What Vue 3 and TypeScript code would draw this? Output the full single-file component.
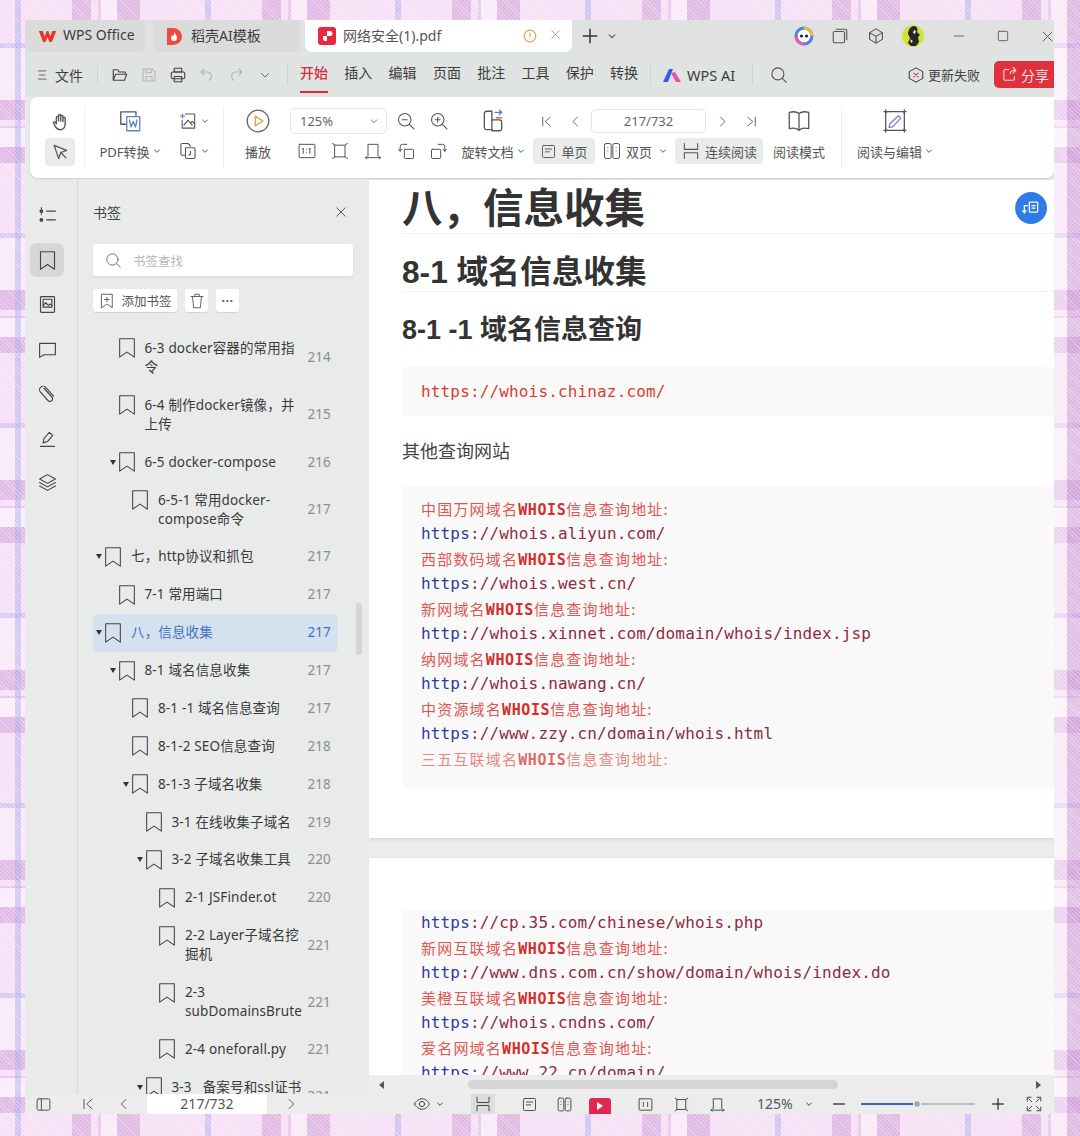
<script setup lang="ts">
import { h } from "vue";
import type { FunctionalComponent } from "vue";

const icons: Record<string, string> = {
  bookmark: '<path d="M4 2h16v20l-8-5.500L4 22z"/>',
  hand: '<path d="M8 13V7a1.2 1.2 0 0 1 2.4 0v4M10.4 11V5a1.2 1.2 0 0 1 2.4 0v6M12.8 11V6a1.2 1.2 0 0 1 2.4 0v5.5M15.2 11.5V8a1.2 1.2 0 0 1 2.4 0v6.5c0 3.6-2.4 6-5.6 6-2.6 0-3.8-1.2-5-3.4L5 13.6c-.7-1.3 1-2.3 1.9-1.2L8 14"/>',
  cursor: '<path d="M5 4l15 6-7 2.6L10.4 20zM13 12.6l6 6.4"/>',
  pdfword: '<path d="M8 15H3.5V3.5h14V7"/><rect x="9" y="8" width="12" height="13" stroke="#5a86c5"/><path d="M11.5 11l1.4 6.5 2.1-5 2.1 5 1.4-6.5" stroke="#5a86c5"/>',
  image: '<path d="M9 3.5h11v17H5V11"/><path d="M7 17l5-6 5 6M15 14.5l2-2 3 3"/><path d="M3 6h5M5.5 3.5v5" stroke="#4a7bd0"/>',
  copypage: '<path d="M8 17H5a1.5 1.5 0 0 1-1.5-1.5V4.5A1.5 1.5 0 0 1 5 3h7l3 3"/><path d="M9 8h10a1.5 1.5 0 0 1 1.5 1.5v10A1.5 1.5 0 0 1 19 21H10.500A1.500 1.500 0 0 1 9 19.500z"/><path d="M15 12v4l-2 1"/>',
  play: '<circle cx="12" cy="12" r="10" stroke="#666"/><path d="M9.500 7.500l7 4.500-7 4.500z" stroke="#e89a3c"/>',
  zoomout: '<circle cx="10.500" cy="10.500" r="7.500"/><path d="M16 16l5.500 5.500M7.500 10.500h6"/>',
  zoomin: '<circle cx="10.500" cy="10.500" r="7.500"/><path d="M16 16l5.500 5.500M7.500 10.500h6M10.500 7.500v6"/>',
  oneone: '<rect x="2.500" y="4" width="19" height="16" rx="1"/><path d="M7.500 9v6M6.500 9.500l1-.5M15.500 9v6M14.500 9.500l1-.5M11.500 10v.1M11.500 14v.1"/>',
  fitpage: '<rect x="6" y="5" width="12" height="14"/><path d="M3 3l3 2M21 3l-3 2M3 21l3-2M21 21l-3-2"/>',
  fitwidth: '<path d="M6 18V4h12v14M3 20h18M3 20l1.500-1.500M3 20l1.500 1.500M21 20l-1.500-1.500M21 20l-1.500 1.500"/>',
  rotleft: '<rect x="10" y="10" width="11" height="11" rx="1"/><path d="M5 12V7a3 3 0 0 1 3-3h5M3 10l2 2.500L7 10"/>',
  rotright: '<rect x="3" y="10" width="11" height="11" rx="1"/><path d="M19 12V7a3 3 0 0 0-3-3h-5M17 10l2 2.500 2-2.500"/>',
  rotdoc: '<path d="M11 20H6a2 2 0 0 1-2-2V5a2 2 0 0 1 2-2h5v8"/><path d="M11 11h7a2 2 0 0 1 2 2v6a2 2 0 0 1-2 2h-7z"/><path d="M14 4h6M18 2l2 2-2 2" stroke="#4a7bd0"/><path d="M20 9h-5" stroke="#e0605c"/>',
  first: '<path d="M6 5v14M18 5l-8 7 8 7"/>',
  prev: '<path d="M15 5l-7 7 7 7"/>',
  next: '<path d="M9 5l7 7-7 7"/>',
  last: '<path d="M18 5v14M6 5l8 7-8 7"/>',
  single: '<rect x="3.500" y="3.500" width="17" height="17" rx="1.500"/><path d="M7.500 8.500h9M7.500 12.500h6"/>',
  double: '<rect x="3" y="3" width="8" height="18" rx="2"/><rect x="13" y="3" width="8" height="18" rx="2"/><path d="M7 8v.1M7 12v.1M17 8v.1M17 12v.1"/>',
  cont: '<path d="M4 3v7h16V3M4 21v-7h16v7"/>',
  book: '<path d="M3 4c4-1 7-.5 9 1 2-1.500 5-2 9-1v15c-4-1-7-.5-9 1.500-2-2-5-2.500-9-1.500zM12 5v15"/>',
  edit: '<rect x="4" y="4" width="16" height="16"/><path d="M15 7.500l2 2-7 7.500-3 .5.5-3z" stroke="#7d7fc9"/><path d="M4 2.500v3M2.500 4h3M20 2.500v3M18.500 4h3M4 18.500v3M2.500 20h3M20 18.500v3M18.500 20h3"/>',
  menu: '<path d="M4 5h13M6 12h9M4 19h13"/>',
  folder: '<path d="M3 19V5h6l2 3h8v3M3 19l3-8h15l-3 8z"/>',
  save: '<path d="M4 4h12l4 4v12H4zM8 4v5h7V4M8 20v-6h8v6"/>',
  print: '<rect x="7" y="3" width="10" height="5"/><rect x="3" y="8" width="18" height="9" rx="2"/><rect x="7" y="14" width="10" height="7"/>',
  undo: '<path d="M8 4L4 8l4 4M4 8h9a6 6 0 0 1 2 11"/>',
  redo: '<path d="M16 4l4 4-4 4M20 8h-9a6 6 0 0 0-2 11"/>',
  chevron: '<path d="M5 9l7 7 7-7"/>',
  search: '<circle cx="10.500" cy="10.500" r="8"/><path d="M16.500 16.500l5 5"/>',
  plus: '<path d="M12 3v18M3 12h18"/>',
  close: '<path d="M5 5l14 14M19 5L5 19"/>',
  min: '<path d="M4 12h16"/>',
  max: '<rect x="4" y="4" width="16" height="16" rx="1.500"/>',
  tabs: '<rect x="3" y="6" width="15" height="15" rx="2"/><path d="M7 3h12a2 2 0 0 1 2 2v12"/>',
  cube: '<path d="M12 2.500l8.500 5v9l-8.500 5-8.500-5v-9zM3.500 7.500l8.500 5 8.500-5M12 12.500v9"/>',
  toc: '<path d="M11 7h10M11 17h10"/><circle cx="5" cy="7" r="1.500" fill="currentColor"/><circle cx="5" cy="17" r="1.500" fill="currentColor"/><path d="M5 3v1M5 10v1"/>',
  thumb: '<rect x="4" y="3" width="16" height="18" rx="1"/><rect x="7" y="6" width="10" height="9"/><path d="M7 13l3-3 3 3 2-1.500 2 1.500"/>',
  comment: '<path d="M3 5h18v13H8l-5 3z"/>',
  clip: '<path d="M8 6l9 10a3 3 0 0 1-4.500 4L4 10.500a4 4 0 0 1 6-5.500l9 10"/>',
  pen: '<path d="M4 21h16M7 17l1-5 6-7 4 3.500-6 7z"/>',
  layers: '<path d="M12 3l9 5-9 5-9-5zM3 12l9 5 9-5M3 16l9 5 9-5"/>',
  trash: '<path d="M4 6h16M9 6V3h6v3M6 6l1.500 15h9L18 6"/>',
  addmark: '<path d="M5 3h14v18l-7-5-7 5zM12 7v6M9 10h6"/>',
  panel: '<rect x="3" y="4" width="18" height="16" rx="2"/><path d="M9 4v16"/>',
  eye: '<path d="M2 12c3-5 6-7 10-7s7 2 10 7c-3 5-6 7-10 7s-7-2-10-7z"/><circle cx="12" cy="12" r="3.500"/>',
  spread: '<rect x="3" y="4" width="18" height="16" rx="1"/><path d="M9 9v6M15 9v6"/>',
  fullscreen: '<path d="M8 3H3v5M16 3h5v5M8 21H3v-5M16 21h5v-5M9 9L5 5M15 9l4-4M9 15l-4 4M15 15l4 4"/>',
  failed: '<path d="M12 2.500l9 5v9l-9 5-9-5v-9z" /><path d="M9 9.500l6 5M15 9.500l-6 5" stroke="#d9363e"/>',
  share: '<path d="M11 5H6a2 2 0 0 0-2 2v11a2 2 0 0 0 2 2h11a2 2 0 0 0 2-2v-3M13 11c0-3 3-5 8-5M17 2l4 4-4 4"/>',
  swap: '<rect x="10" y="5" width="10" height="12" rx="1"/><path d="M13 9h4M13 12h4M8 9H4v9M2 15l2 3 2-3"/>',
};

const Ico: FunctionalComponent<{ n: string; s?: number; w?: number }> = (p) =>
  h("svg", {
    width: p.s ?? 20,
    height: p.s ?? 20,
    viewBox: "0 0 24 24",
    fill: "none",
    stroke: "currentColor",
    "stroke-width": p.w ?? 1.5,
    "stroke-linecap": "round",
    "stroke-linejoin": "round",
    innerHTML: icons[p.n],
  });
Ico.props = ["n", "s", "w"];

const menuIcons = [
  { n: "folder", dim: false },
  { n: "save", dim: true },
  { n: "print", dim: false },
  { n: "undo", dim: true },
  { n: "redo", dim: true },
  { n: "chevron", dim: false },
];
const menus = ["插入", "编辑", "页面", "批注", "工具", "保护", "转换"];
const sideIcons = ["toc", "bookmark", "thumb", "comment", "clip", "pen", "layers"];

type Mark = { label: string; page: number; level: number; arrow?: boolean; active?: boolean };
const marks: Mark[] = [
  { label: "6-3 docker容器的常用指令", page: 214, level: 1 },
  { label: "6-4 制作docker镜像，并上传", page: 215, level: 1 },
  { label: "6-5 docker-compose", page: 216, level: 1, arrow: true },
  { label: "6-5-1 常用docker-compose命令", page: 217, level: 2 },
  { label: "七，http协议和抓包", page: 217, level: 0, arrow: true },
  { label: "7-1 常用端口", page: 217, level: 1 },
  { label: "八，信息收集", page: 217, level: 0, arrow: true, active: true },
  { label: "8-1 域名信息收集", page: 217, level: 1, arrow: true },
  { label: "8-1 -1 域名信息查询", page: 217, level: 2 },
  { label: "8-1-2 SEO信息查询", page: 218, level: 2 },
  { label: "8-1-3 子域名收集", page: 218, level: 2, arrow: true },
  { label: "3-1 在线收集子域名", page: 219, level: 3 },
  { label: "3-2 子域名收集工具", page: 220, level: 3, arrow: true },
  { label: "2-1 JSFinder.ot", page: 220, level: 4 },
  { label: "2-2 Layer子域名挖掘机", page: 221, level: 4 },
  { label: "2-3 subDomainsBrute", page: 221, level: 4 },
  { label: "2-4 oneforall.py", page: 221, level: 4 },
  { label: "3-3\u00a0\u00a0\u00a0备案号和ssl证书查询", page: 221, level: 3, arrow: true },
];

type Line = { site?: string; scheme?: string; rest?: string; faint?: boolean };
const blockOne: Line[] = [
  { site: "中国万网" },
  { scheme: "https", rest: "://whois.aliyun.com/" },
  { site: "西部数码" },
  { scheme: "https", rest: "://whois.west.cn/" },
  { site: "新网" },
  { scheme: "http", rest: "://whois.xinnet.com/domain/whois/index.jsp" },
  { site: "纳网" },
  { scheme: "http", rest: "://whois.nawang.cn/" },
  { site: "中资源" },
  { scheme: "https", rest: "://www.zzy.cn/domain/whois.html" },
  { site: "三五互联", faint: true },
];
const blockTwo: Line[] = [
  { scheme: "https", rest: "://cp.35.com/chinese/whois.php" },
  { site: "新网互联" },
  { scheme: "http", rest: "://www.dns.com.cn/show/domain/whois/index.do" },
  { site: "美橙互联" },
  { scheme: "https", rest: "://whois.cndns.com/" },
  { site: "爱名网" },
  { scheme: "https", rest: "://www.22.cn/domain/" },
];
</script>

<template>
  <div class="window">
    <header class="tabs">
      <div class="tab home">
        <svg width="19" height="15" viewBox="0 0 24 18"><path d="M1 2l5.500 14h3L12 10l2.500 6h3L23 2h-5l-2.500 7L13 2h-2L8.500 9 6 2z" fill="#e6352b" /></svg>
        <span>WPS Office</span>
      </div>
      <div class="tab docer">
        <svg width="15" height="19" viewBox="0 0 15 19"><path d="M0 1h6a9 8.500 0 0 1 0 17H0z" fill="#ef4a3c" /><path d="M7 5c1 2 3 3 3 6a3 3 0 0 1-6 0c0-1.500 1-2 1.500-3 .5 1 1 1 1.500 0z" fill="#fff" /></svg>
        <span>稻壳AI模板</span>
      </div>
      <div class="tab current">
        <svg width="18" height="18" viewBox="0 0 18 18"><rect width="18" height="18" rx="3" fill="#e8283c" /><path d="M9 4h3a2.500 2.500 0 0 1 0 5H9zM5 9h4v5H6.500L5 12.500z" fill="#fff" /></svg>
        <span class="tab-title">网络安全(1).pdf</span>
        <svg class="warn" width="14" height="14" viewBox="0 0 14 14" fill="none" stroke="#e3a44a" stroke-width="1.200"><circle cx="7" cy="7" r="5.800" /><path d="M7 3.800v4M7 9.500v.8" /></svg>
        <span class="tab-x"><Ico n="close" :s="13" /></span>
      </div>
      <span class="tab-plus"><Ico n="plus" :s="18" :w="2" /></span>
      <span class="tab-more"><Ico n="chevron" :s="10" :w="2.500" /></span>
      <div class="win-btns">
        <svg class="mascot" width="20" height="20" viewBox="0 0 20 20">
          <circle cx="10" cy="10" r="8" fill="#fff" stroke="#4b7fe0" stroke-width="3" />
          <path d="M10 2a8 8 0 0 1 8 8" fill="none" stroke="#f0b93a" stroke-width="3" />
          <path d="M2 10a8 8 0 0 0 8 8" fill="none" stroke="#e25fa8" stroke-width="3" />
          <circle cx="7.500" cy="10" r="1.600" fill="#222" />
          <circle cx="12.500" cy="10" r="1.600" fill="#222" />
        </svg>
        <span class="win-tabs"><Ico n="tabs" :s="18" /></span>
        <span class="win-cube"><Ico n="cube" :s="18" /></span>
        <svg class="avatar" width="22" height="22" viewBox="0 0 22 22">
          <circle cx="11" cy="11" r="11" fill="#d3e23a" />
          <path d="M12 1c3 0 4 3 3 6l3 3-2 2 1 5-3 4H9l-3-3 2-5-2-4c0-4 3-8 6-8z" fill="#262626" />
          <path d="M12 5l2 1-1 3-2-1zM8 14l3 2-2 2z" fill="#e9e9e9" />
        </svg>
        <span class="win-min"><Ico n="min" :s="14" /></span>
        <span class="win-max"><Ico n="max" :s="14" /></span>
        <span class="win-close"><Ico n="close" :s="15" /></span>
      </div>
    </header>

    <nav class="menu">
      <span class="menu-burger"><Ico n="menu" :s="14" /></span>
      <span class="menu-file">文件</span>
      <i class="menu-sep"></i>
      <span v-for="item in menuIcons" :key="item.n" class="menu-ico" :class="{ dim: item.dim }">
        <Ico :n="item.n" :s="item.n === 'chevron' ? 12 : 18" />
      </span>
      <i class="menu-sep second"></i>
      <span class="menu-item on">开始</span>
      <span v-for="m in menus" :key="m" class="menu-item">{{ m }}</span>
      <i class="menu-sep third"></i>
      <svg class="ai-logo" width="18" height="14" viewBox="0 0 18 14">
        <path d="M0 14L6 1h4L5 14z" fill="#2f5fe8" />
        <path d="M8 5l4-1 6 10h-5z" fill="#ea4fa0" />
      </svg>
      <span class="ai-text">WPS AI</span>
      <i class="menu-sep fourth"></i>
      <span class="menu-search"><Ico n="search" :s="18" /></span>
      <div class="menu-right">
        <span class="update"><Ico n="failed" :s="18" />更新失败</span>
        <span class="share-btn"><Ico n="share" :s="17" />分享</span>
      </div>
    </nav>

    <section class="ribbon">
      <div class="col hand-col">
        <span class="cell"><Ico n="hand" :s="22" /></span>
        <span class="cell picked"><Ico n="cursor" :s="20" /></span>
      </div>
      <i class="rib-sep s1"></i>
      <div class="col pdf-col">
        <span class="cell"><Ico n="pdfword" :s="26" :w="1.200" /></span>
        <span class="cell label">PDF转换<Ico class="caret" n="chevron" :s="8" :w="3" /></span>
      </div>
      <div class="col img-col">
        <span class="cell"><Ico n="image" :s="20" :w="1.300" /><Ico class="caret" n="chevron" :s="8" :w="3" /></span>
        <span class="cell"><Ico n="copypage" :s="20" :w="1.300" /><Ico class="caret" n="chevron" :s="8" :w="3" /></span>
      </div>
      <i class="rib-sep s2"></i>
      <div class="col play-col">
        <span class="cell"><Ico n="play" :s="26" :w="1.200" /></span>
        <span class="cell label">播放</span>
      </div>
      <div class="col zoom-col">
        <div class="zoom-top">
          <span class="zoom-select">125%<Ico n="chevron" :s="10" :w="2" /></span>
          <span class="cell icon33"><Ico n="zoomout" :s="20" :w="1.300" /></span>
          <span class="cell icon33"><Ico n="zoomin" :s="20" :w="1.300" /></span>
        </div>
        <div class="zoom-bottom">
          <span class="cell icon33"><Ico n="oneone" :s="20" :w="1.200" /></span>
          <span class="cell icon33"><Ico n="fitpage" :s="20" :w="1.200" /></span>
          <span class="cell icon33"><Ico n="fitwidth" :s="20" :w="1.200" /></span>
          <span class="cell icon33"><Ico n="rotleft" :s="20" :w="1.200" /></span>
          <span class="cell icon33"><Ico n="rotright" :s="20" :w="1.200" /></span>
        </div>
      </div>
      <div class="col rot-col">
        <span class="cell"><Ico n="rotdoc" :s="26" :w="1.200" /></span>
        <span class="cell label">旋转文档<Ico class="caret" n="chevron" :s="8" :w="3" /></span>
      </div>
      <div class="col nav-col">
        <div class="nav-top">
          <span class="cell nav-btn"><Ico n="first" :s="15" :w="1.400" /></span>
          <span class="cell nav-btn"><Ico n="prev" :s="15" :w="1.400" /></span>
          <span class="page-box">217/732</span>
          <span class="cell nav-btn"><Ico n="next" :s="15" :w="1.400" /></span>
          <span class="cell nav-btn"><Ico n="last" :s="15" :w="1.400" /></span>
        </div>
        <div class="nav-bottom">
          <span class="cell view single picked"><Ico n="single" :s="17" :w="1.300" />单页</span>
          <span class="cell view double"><Ico n="double" :s="20" :w="1.200" />双页<Ico class="caret" n="chevron" :s="8" :w="3" /></span>
          <span class="cell view cont picked"><Ico n="cont" :s="20" :w="1.300" />连续阅读</span>
        </div>
      </div>
      <div class="col read-col">
        <span class="cell"><Ico n="book" :s="26" :w="1.200" /></span>
        <span class="cell label">阅读模式</span>
      </div>
      <i class="rib-sep s3"></i>
      <div class="col edit-col">
        <span class="cell"><Ico n="edit" :s="28" :w="1.100" /></span>
        <span class="cell label">阅读与编辑<Ico class="caret" n="chevron" :s="8" :w="3" /></span>
      </div>
    </section>

    <main class="main">
      <aside class="rail">
        <span v-for="s in sideIcons" :key="s" class="rail-btn" :class="{ on: s === 'bookmark' }">
          <Ico :n="s" :s="21" :w="1.300" />
        </span>
      </aside>

      <aside class="panel">
        <div class="panel-head">
          <span>书签</span>
          <Ico n="close" :s="14" />
        </div>
        <div class="panel-search">
          <Ico n="search" :s="17" :w="1.300" />
          <span>书签查找</span>
        </div>
        <div class="panel-actions">
          <span class="act add"><Ico n="addmark" :s="18" :w="1.200" />添加书签</span>
          <span class="act square"><Ico n="trash" :s="18" :w="1.200" /></span>
          <span class="act square dots">···</span>
        </div>
        <ul class="tree">
          <li
            v-for="m in marks"
            :key="m.label"
            class="row"
            :class="{ active: m.active }"
            :style="{ paddingLeft: m.level * 13.5 + 'px' }"
          >
            <span class="arrow"><i v-if="m.arrow"></i></span>
            <span class="mark"><Ico n="bookmark" :s="22" :w="1.150" /></span>
            <span class="row-label">{{ m.label }}</span>
            <span class="row-page">{{ m.page }}</span>
          </li>
        </ul>
        <i class="panel-thumb"></i>
      </aside>

      <div class="doc">
        <div class="pages">
          <article class="page first-page">
            <h1>八，信息收集</h1>
            <h2>8-1 域名信息收集</h2>
            <h3>8-1 -1 域名信息查询</h3>
            <pre class="code short"><span class="plain-url">https://whois.chinaz.com/</span></pre>
            <p class="para">其他查询网站</p>
            <div class="code long">
              <div v-for="(l, i) in blockOne" :key="i" class="code-line">
                <template v-if="l.site">
                  <span class="cn" :class="{ faint: l.faint }">{{ l.site }}域名<b>WHOIS</b>信息查询地址:</span>
                </template>
                <template v-else><span class="scheme">{{ l.scheme }}</span><span class="rest">{{ l.rest }}</span></template>
              </div>
            </div>
          </article>
          <article class="page second-page">
            <div class="code tail">
              <div v-for="(l, i) in blockTwo" :key="i" class="code-line">
                <template v-if="l.site">
                  <span class="cn">{{ l.site }}域名<b>WHOIS</b>信息查询地址:</span>
                </template>
                <template v-else><span class="scheme">{{ l.scheme }}</span><span class="rest">{{ l.rest }}</span></template>
              </div>
            </div>
          </article>
        </div>
        <div class="hbar">
          <i class="tri left"></i>
          <i class="hbar-thumb"></i>
          <i class="tri right"></i>
        </div>
        <span class="float-btn"><Ico n="swap" :s="20" :w="1.500" /></span>
      </div>
    </main>

    <footer class="status">
      <span class="st panel-t"><Ico n="panel" :s="17" :w="1.300" /></span>
      <span class="st first-t"><Ico n="first" :s="16" :w="1.300" /></span>
      <span class="st prev-t"><Ico n="prev" :s="16" :w="1.300" /></span>
      <span class="st-page">217/732</span>
      <span class="st next-t"><Ico n="next" :s="16" :w="1.300" /></span>
      <span class="st eye-t"><Ico n="eye" :s="18" :w="1.300" /></span>
      <span class="st caret-t"><Ico n="chevron" :s="8" :w="3" /></span>
      <span class="st cont-t"><Ico n="cont" :s="18" :w="1.300" /></span>
      <span class="st single-t"><Ico n="single" :s="17" :w="1.300" /></span>
      <span class="st double-t"><Ico n="double" :s="17" :w="1.300" /></span>
      <span class="st-play"><i></i></span>
      <span class="st spread-t"><Ico n="spread" :s="17" :w="1.300" /></span>
      <span class="st fit-t"><Ico n="fitpage" :s="17" :w="1.300" /></span>
      <span class="st width-t"><Ico n="fitwidth" :s="17" :w="1.300" /></span>
      <span class="st-zoom">125%</span>
      <span class="st caret2-t"><Ico n="chevron" :s="8" :w="3" /></span>
      <span class="st minus-t"><Ico n="min" :s="16" :w="2.400" /></span>
      <span class="slider"><i class="fill"></i><i class="knob"></i></span>
      <span class="st plus-t"><Ico n="plus" :s="14" :w="2.400" /></span>
      <span class="st full-t"><Ico n="fullscreen" :s="18" :w="1.300" /></span>
    </footer>
  </div>
</template>

<style>
html,
body {
  height: 1136px;
  overflow: hidden;
}
body {
  margin: 0;
  background-color: #f7dff6;
  background-image:
    repeating-linear-gradient(45deg, rgba(255, 255, 255, 0.3) 0 1px, transparent 1px 3px),
    repeating-linear-gradient(90deg, transparent 0 15px, rgba(170, 170, 240, 0.5) 15px 21px, transparent 21px 72px, rgba(200, 150, 210, 0.5) 72px 91px, transparent 91px 98px, rgba(205, 150, 215, 0.3) 98px 101px, rgba(255, 255, 255, 0.35) 101px 117px, rgba(200, 150, 210, 0.5) 117px 140px, transparent 140px 190px),
    repeating-linear-gradient(180deg, transparent 0 43px, rgba(170, 170, 240, 0.4) 43px 48px, rgba(255, 255, 255, 0.3) 48px 100px, rgba(205, 150, 215, 0.5) 100px 120px, transparent 120px 126px, rgba(205, 150, 215, 0.35) 126px 128px, rgba(255, 255, 255, 0.4) 128px 147px, rgba(205, 150, 215, 0.5) 147px 163px, transparent 163px 190px);
}
</style>

<style scoped>
.window {
  width: 1029px;
  height: 1094px;
  margin: 20px 0 0 25px;
  display: flex;
  flex-direction: column;
  overflow: hidden;
  background: #e9eaea;
  color: #3d3d3d;
  font-family: "Noto Sans", "Noto Sans CJK SC", sans-serif;
}
svg {
  display: block;
  flex: none;
}
i {
  font-style: normal;
}

/* tab strip */
.tabs {
  height: 32px;
  flex: none;
  display: flex;
  align-items: center;
  background: #dfe2e1;
  font-size: 14px;
}
.tabs > * {
  flex: none;
}
.tab {
  height: 32px;
  display: flex;
  align-items: center;
  border-radius: 0 0 7px 7px;
}
.tab span {
  position: relative;
  top: -1.5px;
}
.home {
  width: 120px;
  padding-left: 13px;
  gap: 6px;
  background: #d9dcdb;
  box-sizing: border-box;
}
.docer {
  width: 147px;
  margin-left: 8px;
  padding-left: 14px;
  gap: 9px;
  background: #d9dcdb;
  box-sizing: border-box;
}
.current {
  width: 267px;
  margin-left: 5px;
  padding-left: 13px;
  box-sizing: border-box;
  background: #fff;
}
.tab-title {
  margin-left: 7px;
  width: 178px;
  color: #555;
}
.warn {
  margin-left: 2px;
}
.tab-x {
  margin-left: 12px;
  color: #999;
}
.tab-plus {
  margin-left: 9px;
  color: #333;
}
.tab-more {
  margin-left: 8px;
  color: #444;
}
.win-btns {
  margin-left: 177px;
  display: flex;
  align-items: center;
  color: #555;
}
.win-tabs {
  margin-left: 17px;
}
.win-cube {
  margin-left: 18px;
}
.avatar {
  margin-left: 17px;
}
.win-min {
  margin-left: 28px;
}
.win-max {
  margin-left: 30px;
}
.win-close {
  margin-left: 30px;
}

/* menu row */
.menu {
  height: 45px;
  flex: none;
  display: flex;
  align-items: center;
  padding-left: 11px;
  background: #dfe3e1;
  font-size: 14px;
}
.menu-burger {
  color: #555;
}
.menu-file {
  margin-left: 5px;
}
.menu-sep {
  width: 1px;
  height: 20px;
  margin-left: 14px;
  background: #cfd2d1;
}
.menu-ico {
  width: 29px;
  display: flex;
  justify-content: center;
  color: #444;
}
.menu-sep + .menu-ico {
  margin-left: 7px;
}
.dim {
  color: #b5b8b7;
}
.menu-sep.second {
  margin-left: 8px;
}
.menu-item {
  margin-left: 16.300px;
  align-self: flex-start;
  padding: 10px 0 7px;
  line-height: 22px;
  border-bottom: 2px solid transparent;
}
.menu-sep.second + .menu-item {
  margin-left: 12px;
}
.menu-item.on {
  color: #d32f3a;
  font-weight: 500;
  border-bottom-color: #d32f3a;
}
.menu-sep.third {
  margin-left: 12px;
}
.ai-logo {
  margin-left: 12px;
}
.ai-text {
  margin-left: 6px;
  font-size: 14.5px;
}
.menu-sep.fourth {
  margin-left: 17px;
}
.menu-search {
  margin-left: 17px;
  color: #555;
}
.menu-right {
  margin-left: auto;
  display: flex;
  align-items: center;
}
.update {
  display: flex;
  align-items: center;
  gap: 3px;
  font-size: 13px;
  color: #444;
}
.share-btn {
  width: 60px;
  height: 27px;
  box-sizing: border-box;
  margin-left: 14px;
  padding-left: 7px;
  display: flex;
  align-items: center;
  gap: 3px;
  border-radius: 5px 0 0 5px;
  background: #e0303c;
  color: #fbe0e0;
  font-size: 14px;
}

/* ribbon */
.ribbon {
  height: 81px;
  flex: none;
  box-sizing: border-box;
  margin-left: 5px;
  padding: 9px 0 0 15px;
  display: flex;
  background: #fff;
  border-radius: 8px 0 8px 8px;
  box-shadow: 0 1px 2px rgba(0, 0, 0, 0.12);
  color: #555;
  font-size: 13px;
}
.col {
  display: flex;
  flex-direction: column;
  align-items: center;
  flex: none;
}
.col > * {
  flex: none;
}
.cell {
  height: 30px;
  display: flex;
  align-items: center;
  justify-content: center;
  white-space: nowrap;
}
.picked {
  background: #eaeceb;
  border-radius: 4px;
}
.caret {
  margin-left: 3px;
  color: #555;
}
.hand-col {
  width: 30px;
}
.hand-col .cell {
  width: 30px;
  height: 28px;
}
.hand-col .cell:first-child {
  height: 32px;
}
.rib-sep {
  width: 1px;
  height: 62px;
  flex: none;
  background: #eeeeee;
}
.rib-sep.s1 {
  margin-left: 9px;
}
.pdf-col {
  width: 60px;
  margin-left: 15px;
}
.img-col {
  width: 34px;
  margin-left: 16px;
}
.rib-sep.s2 {
  margin-left: 13px;
}
.play-col {
  width: 26px;
  margin-left: 21px;
}
.zoom-col {
  margin-left: 19px;
  width: 166px;
  align-items: flex-start;
}
.zoom-top,
.zoom-bottom {
  display: flex;
  height: 30px;
  align-items: center;
}
.zoom-select {
  width: 97px;
  height: 26px;
  margin-right: 2px;
  padding: 0 7px 0 9px;
  box-sizing: border-box;
  display: flex;
  align-items: center;
  justify-content: space-between;
  border: 1px solid #e3e3e3;
  border-radius: 5px;
  font-size: 13px;
  color: #666;
}
.icon33 {
  width: 33px;
}
.rot-col {
  width: 66px;
  margin-left: 4px;
}
.nav-col {
  width: 231px;
  margin-left: 7px;
  align-items: flex-start;
}
.nav-top,
.nav-bottom {
  display: flex;
  height: 30px;
  align-items: center;
}
.nav-top {
  gap: 3px;
}
.nav-btn {
  width: 26px;
}
.page-box {
  width: 115px;
  height: 24px;
  box-sizing: border-box;
  display: flex;
  align-items: center;
  justify-content: center;
  border: 1px solid #e3e3e3;
  border-radius: 5px;
  font-size: 13px;
  color: #666;
}
.view {
  height: 26px;
  gap: 4px;
}
.view.single {
  width: 62px;
}
.view.double {
  width: 61px;
  margin-left: 9px;
}
.view.cont {
  width: 88px;
  margin-left: 10px;
}
.read-col {
  width: 54px;
  margin-left: 8px;
}
.rib-sep.s3 {
  margin-left: 15px;
}
.edit-col {
  width: 78px;
  margin-left: 14px;
}

/* main split */
.main {
  flex: 1;
  margin-top: 2px;
  min-height: 0;
  display: flex;
}
.rail {
  width: 53px;
  flex: none;
  box-sizing: border-box;
  padding: 18.500px 8px 0 0;
  display: flex;
  flex-direction: column;
  align-items: center;
  gap: 10.500px;
  border-right: 1px solid #d8d9d9;
  color: #444;
}
.rail-btn {
  width: 34px;
  height: 34px;
  display: flex;
  align-items: center;
  justify-content: center;
  border-radius: 7px;
}
.rail-btn.on {
  background: #d5d7d6;
}

/* bookmark panel */
.panel {
  position: relative;
  width: 291px;
  flex: none;
  box-sizing: border-box;
  padding: 0 0 0 15px;
  overflow: hidden;
  display: flex;
  flex-direction: column;
  background: #e9eaea;
}
.panel-head {
  height: 64px;
  flex: none;
  display: flex;
  align-items: center;
  justify-content: space-between;
  padding: 0 6px 0 0;
  margin-right: 15px;
  font-size: 14px;
  color: #444;
}
.panel-search {
  width: 260px;
  height: 32px;
  flex: none;
  box-sizing: border-box;
  padding-left: 12px;
  display: flex;
  align-items: center;
  gap: 11px;
  background: #fff;
  border-radius: 3px;
  box-shadow: 0 1px 2px rgba(0, 0, 0, 0.08);
  font-size: 12.500px;
  color: #b6b6b6;
}
.panel-search svg {
  color: #666;
}
.panel-actions {
  margin-top: 13px;
  height: 23px;
  flex: none;
  display: flex;
  gap: 8px;
}
.act {
  height: 23px;
  display: flex;
  align-items: center;
  justify-content: center;
  background: #fff;
  border-radius: 3px;
  box-shadow: 0 1px 1px rgba(0, 0, 0, 0.1);
  font-size: 12.500px;
  color: #555;
}
.act.add {
  width: 84px;
  gap: 5px;
}
.act.square {
  width: 23px;
}
.act.dots {
  font-weight: 700;
  letter-spacing: 0.5px;
}
.tree {
  list-style: none;
  margin: 17.500px 0 0;
  padding: 0;
  width: 245px;
  flex: none;
}
.row {
  display: flex;
  align-items: flex-start;
  padding: 9.450px 7px 9.450px 0;
  line-height: 19px;
  border-radius: 5px;
  font-size: 13.500px;
  letter-spacing: 0.15px;
  color: #3a3a3a;
}
.row.active {
  background: #d6e1ef;
  color: #3d72c6;
}
.arrow {
  width: 11px;
  height: 19px;
  flex: none;
  display: flex;
  align-items: center;
  justify-content: flex-end;
}
.arrow i {
  width: 0;
  height: 0;
  margin-right: 2px;
  border-left: 3.500px solid transparent;
  border-right: 3.500px solid transparent;
  border-top: 5px solid #333;
}
.mark {
  width: 18px;
  height: 19px;
  flex: none;
  display: flex;
  align-items: center;
  justify-content: center;
  color: #444;
}
.row-label {
  flex: 1;
  min-width: 0;
  margin-left: 9px;
  word-break: normal;
  overflow-wrap: anywhere;
}
.row-page {
  width: 26px;
  flex: none;
  align-self: center;
  text-align: right;
  font-size: 13.500px;
  color: #8d8d8d;
}
.row.active .row-page {
  color: #3d72c6;
}
.panel-thumb {
  position: absolute;
  left: 278px;
  top: 423px;
  width: 6px;
  height: 52px;
  border-radius: 3px;
  background: #d4d6d5;
}

/* document */
.doc {
  position: relative;
  flex: 1;
  min-width: 0;
  display: flex;
  flex-direction: column;
  background: #ececec;
}
.pages {
  flex: 1;
  min-height: 0;
  overflow: hidden;
}
.page {
  background: #fff;
  padding-left: 33px;
  box-shadow: 0 1px 4px rgba(0, 0, 0, 0.12);
}
.first-page {
  height: 658px;
  box-sizing: border-box;
  padding-top: 1px;
}
.second-page {
  margin-top: 20px;
  padding-top: 52px;
  height: 300px;
  box-sizing: border-box;
}
h1,
h2,
h3 {
  margin: 0;
  font-family: "Liberation Sans", "Noto Sans CJK SC", sans-serif;
  font-weight: 700;
  color: #333;
  white-space: nowrap;
}
h1 {
  height: 52px;
  line-height: 57px;
  font-size: 40.500px;
  border-bottom: 1px solid #f2f2f2;
}
h2 {
  margin-top: 19px;
  height: 38px;
  line-height: 38px;
  font-size: 31.700px;
  border-bottom: 1px solid #f2f2f2;
}
h3 {
  margin-top: 18px;
  height: 38px;
  line-height: 40px;
  font-size: 27px;
}
.code {
  margin: 0;
  padding-left: 19px;
  background: #f9f9fa;
  border-radius: 5px 0 0 5px;
  font-family: "DejaVu Sans Mono", "Noto Sans CJK SC", monospace;
  font-size: 16px;
  letter-spacing: 0.15px;
  line-height: 25px;
  white-space: pre;
}
.short {
  margin-top: 19px;
  height: 49px;
  line-height: 49px;
}
.plain-url {
  color: #dc3b30;
}
.para {
  margin: 21px 0 0;
  height: 28px;
  line-height: 28px;
  font-size: 18px;
  color: #444;
}
.long {
  margin-top: 21px;
  height: 302px;
  box-sizing: border-box;
  padding-top: 9.500px;
}
.tail {
  height: 240px;
}
.code-line {
  height: 25px;
}
.scheme {
  color: #2d3a9c;
}
.rest {
  color: #8f2b3d;
}
.cn {
  font-family: "Noto Sans CJK SC", sans-serif;
  font-size: 15px;
  letter-spacing: 1.200px;
  color: #e2564f;
}
.cn b {
  font-family: "DejaVu Sans Mono", monospace;
  font-size: 15px;
  letter-spacing: 0.600px;
  color: #d22f2a;
}
.faint {
  opacity: 0.7;
}
.hbar {
  height: 19px;
  flex: none;
  position: relative;
  display: flex;
  align-items: center;
  background: #ededed;
}
.hbar-thumb {
  width: 370px;
  height: 9px;
  margin-left: 84px;
  border-radius: 5px;
  background: #d5d5d5;
}
.tri {
  width: 0;
  height: 0;
  border-top: 4px solid transparent;
  border-bottom: 4px solid transparent;
}
.tri.left {
  margin-left: 10px;
  border-right: 5px solid #555;
}
.tri.right {
  margin-left: 198px;
  border-left: 5px solid #555;
}
.float-btn {
  position: absolute;
  right: 7px;
  top: 12px;
  width: 32px;
  height: 32px;
  display: flex;
  align-items: center;
  justify-content: center;
  border-radius: 50%;
  background: #2f7ce8;
  color: #fff;
}

/* status bar */
.status {
  height: 20px;
  flex: none;
  display: flex;
  align-items: center;
  overflow: hidden;
  background: #ececec;
  color: #444;
  font-size: 14px;
  line-height: 20px;
}
.st {
  display: flex;
  align-items: center;
  justify-content: center;
  height: 20px;
  flex: none;
}
.panel-t {
  width: 20px;
  margin-left: 8px;
}
.first-t {
  width: 20px;
  margin-left: 25px;
}
.prev-t {
  width: 20px;
  margin-left: 16px;
}
.st-page {
  width: 120px;
  height: 20px;
  margin-left: 13px;
  flex: none;
  display: flex;
  align-items: center;
  justify-content: center;
  background: #fff;
  border-radius: 4px 4px 0 0;
  font-size: 14px;
  color: #555;
}
.next-t {
  width: 20px;
  margin-left: 14px;
}
.eye-t {
  width: 20px;
  margin-left: 111px;
}
.caret-t {
  width: 10px;
  margin-left: 3px;
}
.cont-t {
  width: 24px;
  margin-left: 26px;
  background: #dcdedd;
}
.single-t {
  width: 20px;
  margin-left: 24px;
}
.double-t {
  width: 20px;
  margin-left: 15px;
}
.st-play {
  width: 22px;
  height: 16px;
  margin: 4px 0 0 15px;
  flex: none;
  display: flex;
  align-items: center;
  justify-content: center;
  background: #e0284e;
  border-radius: 3px 3px 0 0;
}
.st-play i {
  width: 0;
  height: 0;
  border-top: 4px solid transparent;
  border-bottom: 4px solid transparent;
  border-left: 6px solid #fff;
}
.spread-t {
  width: 20px;
  margin-left: 24px;
}
.fit-t {
  width: 20px;
  margin-left: 16px;
}
.width-t {
  width: 20px;
  margin-left: 16px;
}
.st-zoom {
  margin-left: 30px;
  width: 38px;
  flex: none;
  color: #555;
}
.caret2-t {
  width: 10px;
  margin-left: 9px;
}
.minus-t {
  width: 16px;
  margin-left: 17px;
}
.slider {
  position: relative;
  width: 114px;
  height: 2px;
  margin-left: 14px;
  flex: none;
  background: #bdbdbd;
}
.fill {
  display: block;
  width: 52px;
  height: 2px;
  background: #3a66b5;
}
.knob {
  position: absolute;
  left: 52px;
  top: -3px;
  width: 8px;
  height: 8px;
  box-sizing: border-box;
  border: 1px solid #fff;
  border-radius: 50%;
  background: #9fa9b8;
}
.plus-t {
  width: 16px;
  margin-left: 15px;
}
.full-t {
  width: 20px;
  margin-left: 18px;
}
</style>
